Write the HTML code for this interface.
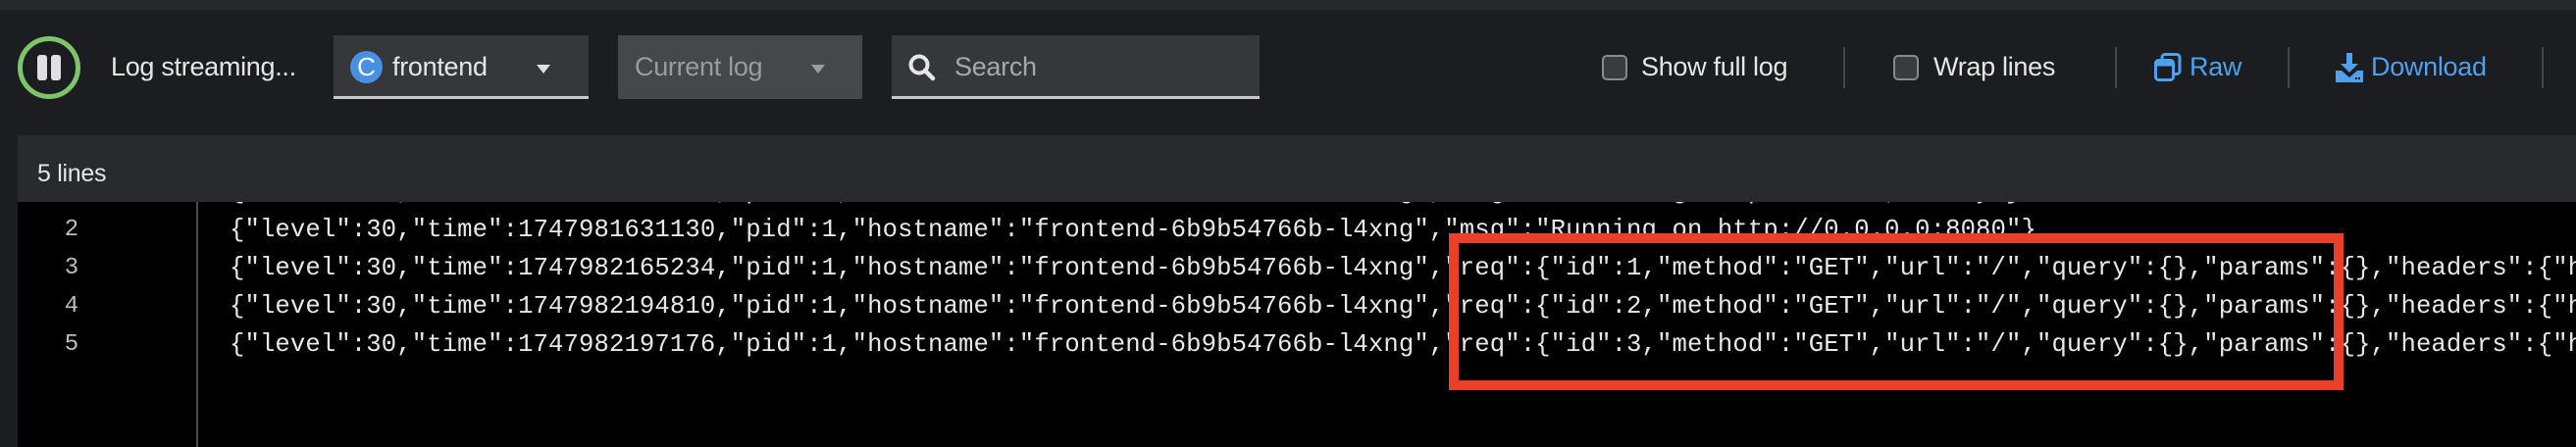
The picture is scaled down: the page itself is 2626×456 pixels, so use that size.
<!DOCTYPE html>
<html><head><meta charset="utf-8"><style>
*{margin:0;padding:0;box-sizing:border-box}
body{width:2626px;height:456px;overflow:hidden;background:#1b1d21;position:relative;font-family:"Liberation Sans",sans-serif}
.a{position:absolute}
.top{left:0;top:0;width:2626px;height:10px;background:#26282c}
.tool{left:18px;top:10px;width:2608px;height:128px;background:#1c1d21}
.hdr{left:18px;top:138px;width:2608px;height:68px;background:#292a2e}
.log{left:18px;top:206px;width:2608px;height:250px;background:#000;overflow:hidden}
.txt{color:#e6e6e6;font-size:27px;white-space:nowrap;line-height:32px;letter-spacing:-0.3px}
.box{height:65px;top:36px}
.sep{width:2px;height:42px;top:48px;background:#44464a}
.cb{width:26px;height:26px;top:56px;border:2px solid #8a8a8a;border-radius:5px;background:#3a3b3e}
.blue{color:#4ea1ee}
.mono{font-family:"Liberation Mono",monospace;font-size:25.6px;letter-spacing:0.12px;color:#e8e8e8;white-space:pre;line-height:38.7px;position:absolute;left:216px}
.ln{position:absolute;left:40px;width:30px;text-align:center;font-family:"Liberation Mono",monospace;font-size:24px;color:#bdbdbd;line-height:38.7px}
</style></head><body>
<div class="a top"></div>
<div class="a tool"></div>
<div class="a hdr"></div>
<div class="a log">
 <div class="a" style="left:182px;top:0;width:2px;height:250px;background:#4a4a4a"></div>
 <div class="ln" style="top:-29px">1</div>
 <div class="ln" style="top:10px">2</div>
 <div class="ln" style="top:49px">3</div>
 <div class="ln" style="top:88px">4</div>
 <div class="ln" style="top:127px">5</div>
 <div class="mono" style="top:-29px">{"level":30,"time":1747981631128,"pid":1,"hostname":"frontend-6b9b54766b-l4xng","msg":"Listening on port 8080, ready"}</div>
 <div class="mono" style="top:10px">{"level":30,"time":1747981631130,"pid":1,"hostname":"frontend-6b9b54766b-l4xng","msg":"Running on http://0.0.0.0:8080"}</div>
 <div class="mono" style="top:49px">{"level":30,"time":1747982165234,"pid":1,"hostname":"frontend-6b9b54766b-l4xng","req":{"id":1,"method":"GET","url":"/","query":{},"params":{},"headers":{"host":"x"}}}</div>
 <div class="mono" style="top:88px">{"level":30,"time":1747982194810,"pid":1,"hostname":"frontend-6b9b54766b-l4xng","req":{"id":2,"method":"GET","url":"/","query":{},"params":{},"headers":{"host":"x"}}}</div>
 <div class="mono" style="top:127px">{"level":30,"time":1747982197176,"pid":1,"hostname":"frontend-6b9b54766b-l4xng","req":{"id":3,"method":"GET","url":"/","query":{},"params":{},"headers":{"host":"x"}}}</div>
</div>
<div class="a" style="left:1477px;top:238px;width:912px;height:160px;border:10px solid #e8402a"></div>

<div class="a" style="left:18px;top:37px;width:64px;height:64px;border:5px solid #7dc46b;border-radius:50%"></div>
<div class="a" style="left:38px;top:56px;width:10px;height:26px;background:#e0e0e0;border-radius:3px"></div>
<div class="a" style="left:52px;top:56px;width:10px;height:26px;background:#e0e0e0;border-radius:3px"></div>
<div class="a txt" style="left:113px;top:52px">Log streaming...</div>

<div class="a box" style="left:340px;width:260px;background:#36373b;border-bottom:3px solid #c8c8c8"></div>
<div class="a" style="left:357px;top:52px;width:33px;height:33px;border-radius:50%;background:#4a90e2;color:#fff;font-size:26px;text-align:center;line-height:33px">C</div>
<div class="a txt" style="left:400px;top:52px">frontend</div>
<div class="a" style="left:547px;top:66px;width:0;height:0;border-left:7px solid transparent;border-right:7px solid transparent;border-top:9px solid #e0e0e0"></div>

<div class="a box" style="left:630px;width:249px;background:#46474b"></div>
<div class="a txt" style="left:647px;top:52px;color:#9a9c9f">Current log</div>
<div class="a" style="left:827px;top:66px;width:0;height:0;border-left:7px solid transparent;border-right:7px solid transparent;border-top:9px solid #9a9c9f"></div>

<div class="a box" style="left:909px;width:375px;background:#36373b;border-bottom:3px solid #c8c8c8"></div>
<svg class="a" style="left:925px;top:54px" width="30" height="30" viewBox="0 0 30 30"><circle cx="12" cy="12" r="8.5" fill="none" stroke="#e6e6e6" stroke-width="4"/><path d="M18 18l8 8" stroke="#e6e6e6" stroke-width="4.5" stroke-linecap="round"/></svg>
<div class="a txt" style="left:973px;top:52px;color:#a5a7aa">Search</div>

<div class="a cb" style="left:1633px"></div>
<div class="a txt" style="left:1673px;top:52px">Show full log</div>
<div class="a sep" style="left:1879px"></div>
<div class="a cb" style="left:1930px"></div>
<div class="a txt" style="left:1971px;top:52px">Wrap lines</div>
<div class="a sep" style="left:2156px"></div>
<svg class="a" style="left:2196px;top:54px" width="28" height="30" viewBox="0 0 28 30"><rect x="8" y="1.5" width="18" height="20" rx="3" fill="none" stroke="#4ea1ee" stroke-width="3"/><rect x="1.5" y="7.5" width="18" height="20" rx="3" fill="#1c1d21" stroke="#4ea1ee" stroke-width="3"/><rect x="1.5" y="7.5" width="18" height="6" fill="#4ea1ee"/></svg>
<div class="a txt blue" style="left:2232px;top:52px">Raw</div>
<div class="a sep" style="left:2332px"></div>
<svg class="a" style="left:2381px;top:54px" width="28" height="30" viewBox="0 0 28 30"><path d="M11 0h6v11h6l-9 9-9-9h6z" fill="#4ea1ee"/><path d="M0 18h6l8 7 8-7h6v12H0z" fill="#4ea1ee"/><rect x="20" y="25" width="2" height="2" fill="#1c1d21"/><rect x="23" y="25" width="2" height="2" fill="#1c1d21"/></svg>
<div class="a txt blue" style="left:2417px;top:52px">Download</div>
<div class="a sep" style="left:2591px"></div>

<div class="a txt" style="left:38px;top:161px;font-size:25px">5 lines</div>
</body></html>
